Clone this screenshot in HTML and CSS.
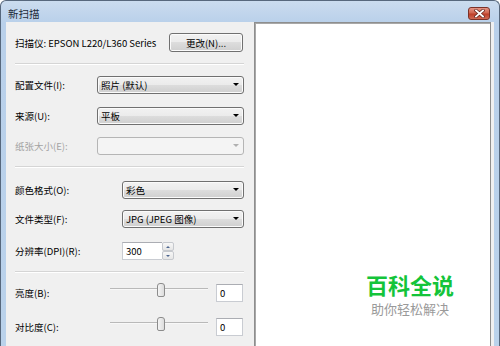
FILE: index.html
```html
<!DOCTYPE html>
<html lang="zh-CN">
<head>
    <meta charset="UTF-8">
    <title>新扫描</title>
    <link rel="stylesheet" href="styles.css">
</head>
<body>
<div class="window">
    <div class="titlebar">
        <span class="title">新扫描</span>
        <div class="close-btn">
            <svg width="11" height="9" viewBox="0 0 11 9">
                <path d="M2 1.5 L9 7.5 M9 1.5 L2 7.5" stroke="#6b2a22" stroke-width="3.4" stroke-linecap="square"/>
                <path d="M2 1.5 L9 7.5 M9 1.5 L2 7.5" stroke="#ffffff" stroke-width="1.8" stroke-linecap="square"/>
            </svg>
        </div>
    </div>

    <div class="client">
        <div class="settings">
            <div class="row scanner">
                <span>扫描仪: EPSON L220/L360 Series</span>
                <div class="btn">更改(N)...</div>
            </div>

            <div class="sep"></div>

            <div class="row m11">
                <span class="label">配置文件(I):</span>
                <div class="combo">照片 (默认)<span class="arrow"></span></div>
            </div>
            <div class="row m13">
                <span class="label">来源(U):</span>
                <div class="combo">平板<span class="arrow"></span></div>
            </div>
            <div class="row m12">
                <span class="label disabled">纸张大小(E):</span>
                <div class="combo off"><span class="arrow"></span></div>
            </div>

            <div class="sep m12"></div>

            <div class="row m13">
                <span class="label wide">颜色格式(O):</span>
                <div class="combo">彩色<span class="arrow"></span></div>
            </div>
            <div class="row m11">
                <span class="label wide">文件类型(F):</span>
                <div class="combo">JPG (JPEG 图像)<span class="arrow"></span></div>
            </div>
            <div class="row m14">
                <span class="label wide">分辨率(DPI)(R):</span>
                <div class="textbox dpi">300</div>
                <div class="spin">
                    <div class="spin-btn"><span class="up"></span></div>
                    <div class="spin-btn"><span class="down"></span></div>
                </div>
            </div>

            <div class="sep m11"></div>

            <div class="row m11">
                <span class="label slim">亮度(B):</span>
                <div class="slider"><div class="track"></div><div class="thumb"></div></div>
                <div class="textbox small">0</div>
            </div>
            <div class="row m16">
                <span class="label slim">对比度(C):</span>
                <div class="slider"><div class="track"></div><div class="thumb"></div></div>
                <div class="textbox small">0</div>
            </div>
        </div>

        <div class="preview">
            <div class="watermark">
                <div class="wm-big">百科全说</div>
                <div class="wm-small">助你轻松解决</div>
            </div>
        </div>
    </div>
</div>
</body>
</html>
```

FILE: styles.css
```css
html, body {
    margin: 0;
    padding: 0;
}
body {
    width: 500px;
    height: 346px;
    overflow: hidden;
    background: #ffffff;
    font-family: "Noto Sans CJK SC", "DejaVu Sans", sans-serif;
    font-size: 9.5px;
    color: #000;
}
.window {
    height: 346px;
    box-sizing: border-box;
    border: 1px solid #57687d;
    border-bottom: none;
    border-radius: 6px 6px 0 0;
    padding: 0 5px;
    background: linear-gradient(#cbdcef, #b9d0ea 22px, #bad2eb);
    display: flex;
    flex-direction: column;
}
.titlebar {
    height: 21px;
    display: flex;
    justify-content: space-between;
    flex-shrink: 0;
}
.title {
    padding-left: 2px;
    line-height: 26px;
    font-size: 10.5px;
    color: #1e2b3a;
}
.close-btn {
    margin-top: 6px;
    margin-right: 4px;
    width: 20px;
    height: 11px;
    border: 1px solid #7b3128;
    border-radius: 3px;
    background: linear-gradient(#e49486, #d0654f 45%, #be3e28 55%, #cf6a54);
    display: flex;
    align-items: center;
    justify-content: center;
}
.client {
    flex: 1;
    display: flex;
    background: #f0f0f0;
    padding-right: 3px;
    min-height: 0;
}
.settings {
    width: 248px;
    box-sizing: border-box;
    padding: 11px 10px 0 9px;
    flex-shrink: 0;
}
.row {
    display: flex;
    align-items: center;
    height: 18px;
}
.scanner {
    height: 19px;
    justify-content: space-between;
}
.m11 { margin-top: 11px; }
.m12 { margin-top: 12px; }
.m13 { margin-top: 13px; }
.m14 { margin-top: 14px; }
.m16 { margin-top: 16px; }

.sep {
    margin-top: 11px;
    border-top: 1px solid #d5d5d5;
    border-bottom: 1px solid #ffffff;
}
.label {
    width: 82px;
    flex-shrink: 0;
}
.label.wide { width: 107px; }
.label.slim { width: 95px; }
.disabled { color: #a3a3a3; }

.btn {
    width: 72px;
    height: 17px;
    margin-right: 1px;
    border: 1px solid #707070;
    border-radius: 3px;
    background: linear-gradient(#f2f2f2, #ebebeb 50%, #dddddd 50%, #cfcfcf);
    display: flex;
    align-items: center;
    justify-content: center;
    box-shadow: inset 0 0 0 1px #fbfbfb;
}
.combo {
    flex: 1;
    height: 16px;
    border: 1px solid #707070;
    border-radius: 3px;
    background: linear-gradient(#f2f2f2, #ebebeb 50%, #dddddd 50%, #cfcfcf);
    box-shadow: inset 0 0 0 1px #fbfbfb;
    display: flex;
    align-items: center;
    padding-left: 3px;
    position: relative;
}
.combo.off {
    border-color: #b5b5b5;
    background: #f4f4f4;
    box-shadow: none;
}
.arrow {
    position: absolute;
    right: 4px;
    top: 6px;
    border-left: 3px solid transparent;
    border-right: 3px solid transparent;
    border-top: 3px solid #000;
}
.combo.off .arrow {
    border-top-color: #b0b0b0;
}
.textbox {
    height: 16px;
    border: 1px solid #c9ccd2;
    border-top-color: #abadb3;
    background: #ffffff;
    display: flex;
    align-items: center;
    padding-left: 3px;
    box-sizing: content-box;
}
.dpi {
    width: 36px;
    border-right: none;
}
.spin {
    width: 12px;
    height: 18px;
    display: flex;
    flex-direction: column;
}
.spin-btn {
    flex: 1;
    border: 1px solid #c6c9ce;
    border-radius: 2px;
    background: linear-gradient(#f7f7f7, #e6e6e6);
    display: flex;
    align-items: center;
    justify-content: center;
}
.up {
    border-left: 2px solid transparent;
    border-right: 2px solid transparent;
    border-bottom: 2px solid #4e6690;
}
.down {
    border-left: 2px solid transparent;
    border-right: 2px solid transparent;
    border-top: 2px solid #4e6690;
}
.slider {
    width: 98px;
    height: 18px;
    position: relative;
    margin-right: 8px;
}
.track {
    margin-top: 4px;
    height: 0;
    border-top: 1px solid #b9b9b9;
    border-bottom: 1px solid #f8f8f8;
}
.thumb {
    position: absolute;
    left: 47px;
    top: -1px;
    width: 6px;
    height: 12px;
    border: 1px solid #8c8c8c;
    border-radius: 3px 3px 2px 2px;
    background: linear-gradient(90deg, #f4f4f4, #dcdcdc);
}
.textbox.small {
    width: 22px;
}

.preview {
    flex: 1;
    background: #ffffff;
    border: 1px solid #8e8e8e;
    border-bottom: none;
    box-shadow: inset 1px 1px 0 #a8a8a8;
    position: relative;
}
.watermark {
    position: absolute;
    left: 111px;
    top: 245px;
    text-align: center;
}
.wm-big {
    font-size: 22px;
    font-weight: bold;
    color: #14c43a;
    line-height: normal;
}
.wm-small {
    font-size: 13px;
    color: #9a9a9a;
    line-height: normal;
    margin-top: -1px;
}
```
